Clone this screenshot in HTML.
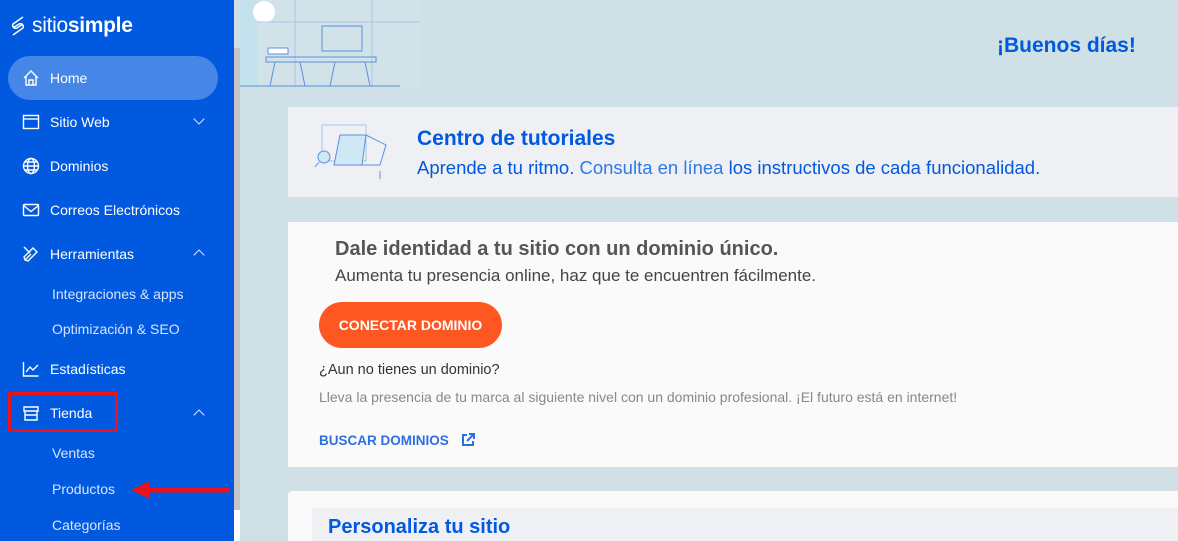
<!DOCTYPE html>
<html style="overflow:hidden"><head><meta charset="utf-8"><style>
*{margin:0;padding:0;box-sizing:border-box}
html,body{width:1178px;height:541px;overflow:hidden}
body{position:relative;font-family:"Liberation Sans",sans-serif;background:#cfe1e7}
.sb{position:absolute;left:0;top:0;width:234px;height:541px;background:#0059df;color:#fff}
.scr{position:absolute;left:234px;top:48px;width:6px;height:462px;background:#c6c6c6}
.scr2{position:absolute;left:234px;top:510px;width:6px;height:31px;background:#fff}
.logo{position:absolute;left:10px;top:14px;font-size:21px;color:#fff;letter-spacing:-.3px;display:flex;align-items:center}
.it{position:absolute;left:22px;font-size:14px;display:flex;align-items:center;height:20px;color:#fff}
.it svg{width:18px;height:18px;margin-right:10px;fill:none;stroke:#fff;stroke-width:1.4}
.sub{position:absolute;left:52px;font-size:14px;color:#d7e4ff}
.chev{position:absolute;left:195px;width:8px;height:8px;border-left:1.5px solid #e0e8ff;border-bottom:1.5px solid #e0e8ff}
.card{position:absolute;left:288px;right:0;overflow:hidden}
</style></head><body>
<div class="sb">
<div class="logo"><svg width="16" height="22" viewBox="0 0 16 22" fill="none" stroke="#fff" stroke-width="1.5" style="margin-right:6px"><path d="M13 2L3 9a3 3 0 004 4l6-4M3 20l10-7a3 3 0 00-4-4L3 13"/></svg>sitio<b>simple</b></div>
<div style="position:absolute;left:8px;top:56px;width:210px;height:44px;border-radius:22px;background:rgba(255,255,255,.27)"></div>
<div class="it" style="top:68px"><svg viewBox="0 0 18 18"><path d="M2 9L9 2l7 7M4 7v9h10V7M7 16v-5h4v5"/></svg>Home</div>
<div class="it" style="top:112px"><svg viewBox="0 0 18 18"><rect x="1.5" y="2.5" width="15" height="13"/><path d="M1.5 6h15"/></svg>Sitio Web</div>
<div class="chev" style="top:115px;transform:rotate(-45deg)"></div>
<div class="it" style="top:156px"><svg viewBox="0 0 18 18"><circle cx="9" cy="9" r="7.5"/><ellipse cx="9" cy="9" rx="3.5" ry="7.5"/><path d="M1.5 9h15M3 5h12M3 13h12"/></svg>Dominios</div>
<div class="it" style="top:200px"><svg viewBox="0 0 18 18"><rect x="1.5" y="3.5" width="15" height="11" rx="1"/><path d="M1.5 4.5l7.5 6 7.5-6"/></svg>Correos Electrónicos</div>
<div class="it" style="top:244px"><svg viewBox="0 0 18 18"><path d="M2 2l6 6M3 15l6-6M11 3l4 4-9 9-3-1-1-3z"/></svg>Herramientas</div>
<div class="chev" style="top:251px;transform:rotate(135deg)"></div>
<div class="sub" style="top:286px">Integraciones &amp; apps</div>
<div class="sub" style="top:321px">Optimización &amp; SEO</div>
<div class="it" style="top:359px"><svg viewBox="0 0 18 18"><path d="M1.5 2v14h15M4 12l4-5 3 3 5-5"/></svg>Estadísticas</div>
<div class="it" style="top:403px"><svg viewBox="0 0 18 18"><path d="M2 3h14v4H2zM3 7v9h12V7M3 11h12"/></svg>Tienda</div>
<div class="chev" style="top:411px;transform:rotate(135deg)"></div>
<div class="sub" style="top:445px">Ventas</div>
<div class="sub" style="top:481px">Productos</div>
<div class="sub" style="top:517px">Categorías</div>
<div style="position:absolute;left:8px;top:392px;width:110px;height:40px;border:3px solid #f0101a"></div>
<svg style="position:absolute;left:128px;top:478px" width="102" height="24"><path d="M100 12H14" stroke="#f0101a" stroke-width="5" stroke-linecap="round"/><path d="M3 12L22 3v18z" fill="#f0101a"/></svg>
</div>
<div class="scr"></div><div class="scr2"></div>
<svg style="position:absolute;left:240px;top:0" width="180" height="87"><rect x="0" y="0" width="18" height="87" fill="#b3e0f2"/><rect x="0" y="0" width="180" height="87" fill="#d3e3ea" opacity=".5"/><circle cx="24" cy="12" r="11" fill="#fff"/><path d="M55 0v87M132 0v87M18 22h162" stroke="#a9c7ea"/><path d="M26 57h110v5H26zM35 62l-5 24M125 62l5 24M60 62l5 24M95 62l-5 24M0 86h160" stroke="#5e8ee0" fill="none"/><rect x="82" y="26" width="40" height="25" fill="none" stroke="#5e8ee0"/><rect x="28" y="48" width="20" height="6" fill="#fff" stroke="#5e8ee0"/></svg>
<div style="position:absolute;left:997px;top:34px;font-size:21px;font-weight:bold;color:#0059df">¡Buenos días!</div>
<div class="card" style="top:107px;height:90px;background:#eef0f4">
<svg style="position:absolute;left:26px;top:14px" width="80" height="62" fill="none" stroke="#5e8ee0"><rect x="8" y="4" width="44" height="36" stroke="#a9c7ea"/><circle cx="10" cy="36" r="6" fill="#cfe8f6"/><path d="M5 41l-4 5"/><path d="M26 14h26l-4 30H20z" fill="#cfe8f6"/><path d="M52 14l20 10-6 20H48M66 50v8"/></svg>
<div style="position:absolute;left:129px;top:20px;font-size:21px;font-weight:bold;color:#0059df">Centro de tutoriales</div>
<div style="position:absolute;left:129px;top:50px;font-size:18.5px;color:#0059df">Aprende a tu ritmo. <span style="color:#2d7be5">Consulta en línea</span> los instructivos de cada funcionalidad.</div>
</div>
<div class="card" style="top:222px;height:245px;background:#fafafa">
<div style="position:absolute;left:47px;top:16px;font-size:20px;font-weight:bold;color:#555">Dale identidad a tu sitio con un dominio único.</div>
<div style="position:absolute;left:47px;top:44px;font-size:17px;color:#444">Aumenta tu presencia online, haz que te encuentren fácilmente.</div>
<div style="position:absolute;left:31px;top:80px;width:183px;height:46px;border-radius:23px;background:#ff5722;color:#fff;font-size:14px;font-weight:bold;text-align:center;line-height:46px">CONECTAR DOMINIO</div>
<div style="position:absolute;left:31px;top:140px;font-size:14.5px;color:#333">¿Aun no tienes un dominio?</div>
<div style="position:absolute;left:31px;top:167px;font-size:14px;color:#888">Lleva la presencia de tu marca al siguiente nivel con un dominio profesional. ¡El futuro está en internet!</div>
<div style="position:absolute;left:31px;top:211px;font-size:13.5px;font-weight:bold;color:#2d6fe0">BUSCAR DOMINIOS <svg width="14" height="14" style="margin-left:8px;vertical-align:-2px" fill="none" stroke="#2d6fe0" stroke-width="2"><path d="M6 2H2v10h10V8M8 1h5v5M13 1L6 8"/></svg></div>
</div>
<div class="card" style="top:491px;height:50px;background:#fafafa;border-radius:4px 0 0 0">
<div style="position:absolute;left:24px;top:17px;right:0;height:40px;background:#eef0f4"></div>
<div style="position:absolute;left:40px;top:25px;font-size:20px;font-weight:bold;color:#0059df">Personaliza tu sitio</div>
</div>
</body></html>
